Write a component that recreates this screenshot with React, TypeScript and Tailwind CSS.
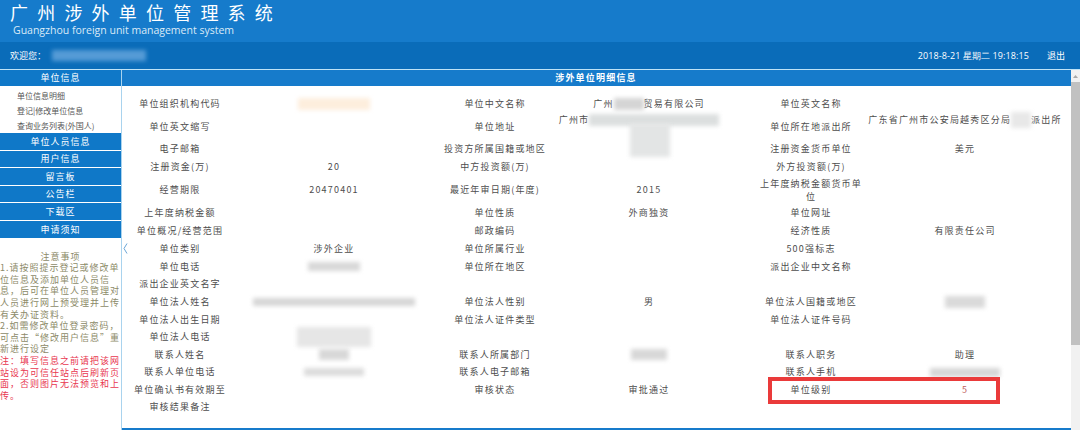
import React from 'react';

const Blur: React.FC<{ className: string }> = ({ className }) => (
  <span className={`block shrink-0 blur-[2px] ${className}`} />
);

type Cell = React.ReactNode;

const rows: Cell[][] = [
  ['单位组织机构代码', <Blur className="w-[72px] h-[12px] bg-[#fdeedd]" />, '单位中文名称',
    <span className="flex items-center">广州<Blur className="w-[30px] h-[12px] bg-[#d5d5d5]" />贸易有限公司</span>, '单位英文名称', ''],
  ['单位英文缩写', '', '单位地址',
    <span className="relative flex items-center -translate-x-[10px] -translate-y-[7px]">广州市<Blur className="w-[130px] h-[12px] bg-[#dcdfdf]" />
      <Blur className="absolute left-[71px] top-[10px] w-[40px] h-[34px] bg-[#e3e5e5]" /></span>,
    '单位所在地派出所',
    <span className="flex items-center -translate-y-[7px] whitespace-nowrap">广东省广州市公安局越秀区分局<Blur className="w-[20px] h-[16px] bg-[#e8e8e8]" />派出所</span>],
  ['电子邮箱', '', '投资方所属国籍或地区', '', '注册资金货币单位', '美元'],
  ['注册资金(万)', '20', '中方投资额(万)', '', '外方投资额(万)', ''],
  ['经营期限', '20470401', '最近年审日期(年度)', '2015', <span className="block w-[106px] leading-[13px]">上年度纳税金额货币单位</span>, ''],
  ['上年度纳税金额', '', '单位性质', '外商独资', '单位网址', ''],
  ['单位概况/经营范围', '', '邮政编码', '', '经济性质', '有限责任公司'],
  ['单位类别', '涉外企业', '单位所属行业', '', '500强标志', ''],
  ['单位电话', <Blur className="w-[52px] h-[9px] bg-[#d8d8d8]" />, '单位所在地区', '', '派出企业中文名称', ''],
  ['派出企业英文名字', '', '', '', '', ''],
  ['单位法人姓名', <Blur className="w-[162px] h-[8px] bg-[#d6d6d6]" />, '单位法人性别', '男', '单位法人国籍或地区', <Blur className="w-[40px] h-[12px] bg-[#dadada]" />],
  ['单位法人出生日期', '', '单位法人证件类型', '', '单位法人证件号码', ''],
  ['单位法人电话', <Blur className="w-[74px] h-[20px] bg-[#e6e6e6]" />, '', '', '', ''],
  ['联系人姓名', <Blur className="w-[30px] h-[11px] bg-[#d8d8d8]" />, '联系人所属部门', <Blur className="w-[36px] h-[11px] bg-[#d8d8d8]" />, '联系人职务', '助理'],
  ['联系人单位电话', <Blur className="w-[60px] h-[8px] bg-[#dcdcdc]" />, '联系人电子邮箱', '', '联系人手机', <Blur className="w-[70px] h-[9px] bg-[#d6d6d6]" />],
  ['单位确认书有效期至', '', '审核状态', '审批通过', '单位级别', <span className="text-[#c0605c]">5</span>],
  ['审核结果备注', '', '', '', '', ''],
];

const Bar: React.FC<{ label: string; className?: string }> = ({ label, className = '' }) => (
  <div className={`flex h-[16.6px] items-center justify-center bg-[#0f78c8] text-white mb-px ${className}`}>{label}</div>
);

export default function App() {
  return (
    <div className="relative h-[430px] w-[1080px] overflow-hidden bg-white font-['Noto_Sans_CJK_SC','Liberation_Sans',sans-serif] text-[9px] tracking-[1.2px] text-[#4d4d4d]">
      <header className="flex h-[42px] flex-col bg-[#167bcb] pl-[10px] pt-[1px] text-white">
        <div className="text-[18px] leading-[23px] tracking-[9.2px]">广州涉外单位管理系统</div>
        <div className="pl-[3px] font-['Open_Sans',sans-serif] text-[10.5px] leading-[12px] tracking-normal text-[#dbeaf7]">Guangzhou foreign unit management system</div>
      </header>

      <div className="flex h-[27px] items-center bg-[#0a6cb9] pl-[10px] pr-[15px] text-white tracking-normal">
        <span>欢迎您：</span>
        <Blur className="ml-[6px] w-[94px] h-[11px] bg-[#559bd6]" />
        <span className="ml-auto font-['Open_Sans',sans-serif] tracking-[0.1px]">2018-8-21 星期二 19:18:15</span>
        <span className="ml-[18px]">退出</span>
      </div>
      <div className="h-px bg-[#bfe3f7]" />

      <div className="flex">
        <aside className="w-[121px] shrink-0 text-center tracking-[1px]">
          <Bar label="单位信息" className="h-[16px] mb-0" />
          <div className="flex h-[46px] flex-col justify-center pl-[17px] text-left text-[8px] leading-[15px] tracking-normal text-[#555]">
            <div>单位信息明细</div>
            <div>登记|修改单位信息</div>
            <div>查询业务列表(外国人)</div>
          </div>
          <Bar label="单位人员信息" />
          <Bar label="用户信息" />
          <Bar label="留言板" />
          <Bar label="公告栏" />
          <Bar label="下载区" />
          <Bar label="申请须知" />
          <div className="pt-[12px] text-left leading-[11.6px] text-[#8c8a68] break-all">
            <div className="text-center">注意事项</div>
            <div>1.请按照提示登记或修改单位信息及添加单位人员信息，后可在单位人员管理对人员进行网上预受理并上传有关办证资料。</div>
            <div>2.如需修改单位登录密码，可点击“修改用户信息”重新进行设定</div>
            <div className="text-[#e8364f]">注：填写信息之前请把该网站设为可信任站点后刷新页面，否则图片无法预览和上传。</div>
          </div>
        </aside>

        <main className="h-[361px] w-[950px] shrink-0 border-l border-[#a9d3ee]">
          <div className="flex h-[16px] w-[949px] items-center justify-center bg-[#167bcb] pr-[1px] font-bold text-white">涉外单位明细信息</div>
          <div className="grid grid-cols-[116px_192px_130px_178px_146px_162px] grid-rows-[21px_26px_18px_18px_28px_18px_18px_18px_17px_18px_18px_17px_18px_17px_18px_17px_18px] pt-[7px]">
            {rows.flat().map((cell, i) => (
              <div key={i} className="flex items-center justify-center whitespace-normal text-center">
                {cell}
              </div>
            ))}
          </div>
          <div className="mt-[12px] h-[3px] w-[949px] bg-[#167bcb]" />
        </main>

        <div className="flex h-[361px] w-[9px] shrink-0 flex-col bg-[#f1f1f1]">
          <div className="flex h-[12px] items-center justify-center">
            <svg width="7" height="5" viewBox="0 0 7 5"><path d="M3.5 1 L6 4 H1 Z" fill="#a8a8a8" /></svg>
          </div>
          <div className="h-[263px] bg-[#c1c1c1]" />
        </div>
      </div>

      {/* collapse arrow on the sidebar edge */}
      <svg className="absolute left-[123px] top-[243px]" width="5" height="11" viewBox="0 0 5 11" fill="none">
        <path d="M4 0.5 L1 5.5 L4 10.5" stroke="#6aa5d6" strokeWidth="1" />
      </svg>
      {/* red annotation around the level row */}
      <div className="absolute left-[768px] top-[377px] h-[27px] w-[232px] border-[4px] border-[#ea3a3a]" />
    </div>
  );
}
